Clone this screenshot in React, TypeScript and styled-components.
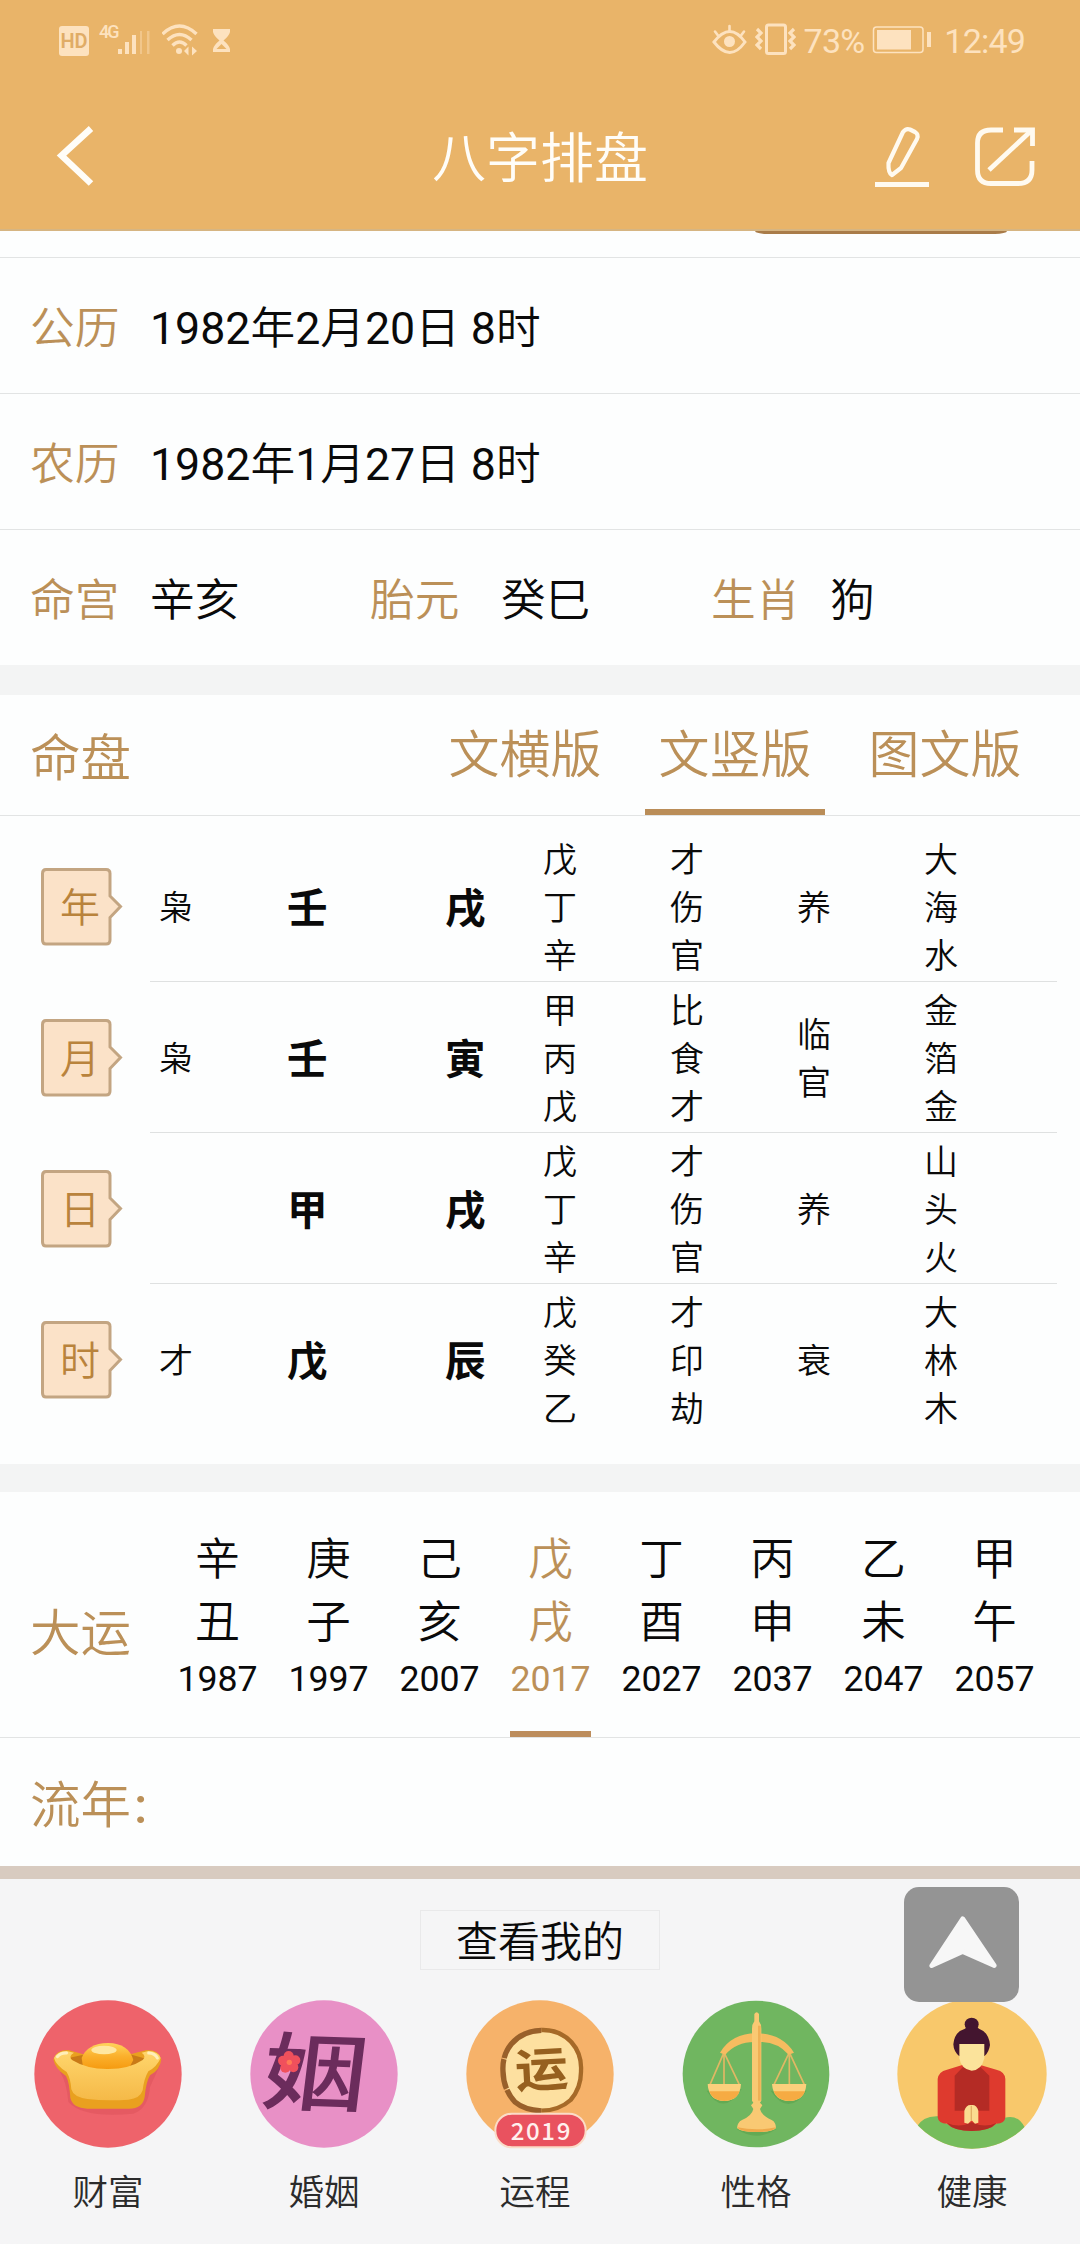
import React from "react";
import styled, { createGlobalStyle } from "styled-components";

const GOLD = "#bb9058";
const STATUS = "#fde2bf";

const GlobalStyle = createGlobalStyle`
  * { box-sizing: border-box; }
  body {
    margin: 0;
    background: #fdfefe;
    font-family: Roboto, "Noto Sans CJK SC", sans-serif;
    font-weight: 350;
    color: #0a0a0a;
  }
`;

const Screen = styled.main`
  width: 1080px;
  height: 2244px;
  display: flex;
  flex-direction: column;
  overflow: hidden;
`;

/* ---------- header ---------- */
const Header = styled.header`
  flex: none;
  height: 231px;
  background: #e9b469;
  border-bottom: 2px solid #d6b582;
`;

const StatusBar = styled.div`
  height: 80px;
  padding: 0 55px 0 59px;
  display: flex;
  justify-content: space-between;
  align-items: center;
  color: ${STATUS};
`;

const StatusGroup = styled.div<{ $gap: number }>`
  display: flex;
  align-items: center;
  gap: ${(p) => p.$gap}px;
  font-size: 34px;
  line-height: 40px;
  svg { display: block; flex: none; }
`;

const HdBadge = styled.span`
  width: 30px;
  height: 30px;
  margin-top: 2px;
  border-radius: 3px;
  background: ${STATUS};
  color: #e0ac66;
  font-size: 20px;
  font-weight: 600;
  line-height: 31px;
  text-align: center;
`;

const Network = styled.span`
  display: flex;
  align-items: flex-start;
  font-size: 18px;
  font-weight: 500;
  line-height: 17px;
  letter-spacing: -2px;
`;

const BatteryText = styled.span`
  font-size: 34px;
  font-weight: 400;
  letter-spacing: -0.8px;
  margin-top: 2px;
`;

const Clock = styled(BatteryText)`
  margin-left: 4px;
`;

const TitleBar = styled.div`
  height: 149px;
  display: grid;
  grid-template-columns: 1fr auto 1fr;
  align-items: center;
`;

const IconButton = styled.button`
  padding: 0;
  border: 0;
  background: none;
  display: block;
  svg { display: block; }
`;

const BackSlot = styled.div`
  padding: 3px 0 0 56px;
`;

const ActionSlot = styled.div`
  padding: 4px 43px 0 0;
  display: flex;
  justify-content: flex-end;
  gap: 43px;
`;

const Title = styled.h1`
  margin: 11px 0 0;
  font-size: 54px;
  font-weight: 350;
  line-height: 64px;
  color: #fffdf8;
`;

/* ---------- profile rows ---------- */
const ScrolledCard = styled.div`
  flex: none;
  height: 27px;
  padding-left: 755px;
  border-bottom: 1px solid #e2e4e4;
`;

const HiddenButtonEdge = styled.div`
  width: 252px;
  height: 3px;
  background: #a97c49;
  border-radius: 0 0 12px 12px / 0 0 3px 3px;
`;

const InfoRow = styled.div<{ $last?: boolean }>`
  flex: none;
  height: ${(p) => (p.$last ? 135 : 136)}px;
  padding: 7px 0 0 30px;
  display: flex;
  align-items: center;
  font-size: 44.7px;
  line-height: 60px;
  border-bottom: ${(p) => (p.$last ? "0" : "1px solid #e2e4e4")};
`;

const InfoLabel = styled.span<{ $width?: number }>`
  color: ${GOLD};
  width: ${(p) => p.$width ?? 120}px;
`;

const InfoValue = styled.span<{ $width?: number }>`
  width: ${(p) => (p.$width ? p.$width + "px" : "auto")};
  white-space: pre;
`;

const Digits = styled.span`
  font-weight: 400;
`;

const Divider = styled.div<{ $height: number }>`
  flex: none;
  height: ${(p) => p.$height}px;
  background: #f3f4f4;
`;

/* ---------- chart ---------- */
const ChartHeader = styled.div`
  flex: none;
  height: 121px;
  padding: 0 45px 0 30px;
  display: flex;
  justify-content: space-between;
  border-bottom: 1px solid #e2e4e4;
`;

const SectionLabel = styled.h2`
  margin: 0;
  font-size: 50.5px;
  font-weight: 350;
  line-height: 60px;
  color: ${GOLD};
`;

const ChartTitle = styled(SectionLabel)`
  padding-top: 34px;
`;

const Colon = styled.span`
  margin-left: 3px;
  font-weight: 500;
`;

const Tabs = styled.div`
  display: flex;
  gap: 30px;
`;

const Tab = styled.button<{ $active?: boolean }>`
  width: 180px;
  height: 120px;
  padding: 7px 0 0;
  border: 0;
  border-bottom: 6px solid ${(p) => (p.$active ? "#ba8d58" : "transparent")};
  background: none;
  font: inherit;
  font-size: 51px;
  line-height: 60px;
  color: ${GOLD};
`;

const ChartBody = styled.div`
  flex: none;
  padding: 15px 23px 29px 0;
  height: 648px;
`;

const PillarRow = styled.div`
  height: 151px;
  display: flex;
`;

const BadgeCell = styled.div`
  width: 150px;
  padding-left: 41px;
  display: flex;
  align-items: center;
`;

const Badge = styled.div`
  width: 82px;
  height: 78px;
  display: grid;
  color: #b9833c;
  font-size: 40px;
  line-height: 81px;
  > * { grid-area: 1 / 1; }
  > span { padding-left: 19px; }
`;

const PillarCells = styled.div<{ $line: boolean }>`
  flex: 1;
  padding-left: 9px;
  display: grid;
  grid-template-columns: 128px 158px 98px 127px 127px 127px 1fr;
  align-items: center;
  border-bottom: 1px solid ${(p) => (p.$line ? "#dfe1e1" : "transparent")};
`;

const SmallText = styled.span`
  width: 34px;
  padding-top: 3px;
  font-size: 34px;
  line-height: 48px;
  word-break: break-all;
`;

const Stem = styled.strong`
  padding-top: 5px;
  font-size: 40.5px;
  font-weight: 700;
  line-height: 50px;
`;

/* ---------- luck cycles ---------- */
const LuckSection = styled.section`
  flex: none;
  height: 246px;
  padding-left: 30px;
  display: flex;
  border-bottom: 1px solid #e2e4e4;
`;

const LuckTitle = styled(SectionLabel)`
  width: 132px;
  padding-top: 112px;
`;

const LuckList = styled.div`
  display: grid;
  grid-template-columns: repeat(8, 111px);
`;

const LuckItem = styled.div<{ $active?: boolean }>`
  display: flex;
  flex-direction: column;
  align-items: center;
  padding-top: 37px;
  font-size: 44.5px;
  line-height: 63px;
  color: ${(p) => (p.$active ? GOLD : "inherit")};
`;

const LuckYear = styled.span<{ $active?: boolean }>`
  height: 82px;
  border-bottom: 6px solid ${(p) => (p.$active ? "#bd8d5c" : "transparent")};
  font-size: 35.7px;
  font-weight: 400;
  line-height: 49px;
`;

const YearSection = styled.section`
  flex: none;
  height: 128px;
  padding: 38px 30px 0;
`;

/* ---------- bottom panel ---------- */
const BottomPanel = styled.footer`
  position: relative;
  flex: 1;
  border-top: 13px solid #d8cbc0;
  background: #f5f5f6;
  display: flex;
  flex-direction: column;
  align-items: center;
`;

const ViewMine = styled.div`
  width: 240px;
  height: 60px;
  margin-top: 31px;
  border: 1px solid #e9e9ea;
  text-align: center;
  font-size: 42px;
  line-height: 63px;
`;

const Shortcuts = styled.nav`
  width: 1080px;
  margin-top: 29px;
  display: grid;
  grid-template-columns: repeat(5, 1fr);
`;

const Shortcut = styled.a`
  display: flex;
  flex-direction: column;
  align-items: center;
  font-size: 35.5px;
  line-height: 50px;
  color: #2b2b2b;
  svg { display: block; height: 150px; }
`;

const ShortcutLabel = styled.span<{ $shift: number }>`
  margin-top: 19px;
  padding-right: ${(p) => p.$shift}px;
`;

const ScrollTop = styled.button`
  position: absolute;
  left: 904px;
  top: 8px;
  width: 115px;
  height: 115px;
  padding: 0;
  border: 0;
  border-radius: 15px;
  background: #949494;
  svg { display: block; }
`;

const CJK = '"Noto Sans CJK SC", sans-serif';

const pillars = [
  { name: "年", god: "枭", stem: "壬", branch: "戌", hidden: "戊丁辛", gods: "才伤官", phase: "养", sound: "大海水" },
  { name: "月", god: "枭", stem: "壬", branch: "寅", hidden: "甲丙戊", gods: "比食才", phase: "临官", sound: "金箔金" },
  { name: "日", god: "", stem: "甲", branch: "戌", hidden: "戊丁辛", gods: "才伤官", phase: "养", sound: "山头火" },
  { name: "时", god: "才", stem: "戊", branch: "辰", hidden: "戊癸乙", gods: "才印劫", phase: "衰", sound: "大林木" },
];

const luck = [
  ["辛", "丑", "1987"],
  ["庚", "子", "1997"],
  ["己", "亥", "2007"],
  ["戊", "戌", "2017"],
  ["丁", "酉", "2027"],
  ["丙", "申", "2037"],
  ["乙", "未", "2047"],
  ["甲", "午", "2057"],
];

/* Numerals are set a step heavier than the characters around them. */
const DateText = ({ children }: { children: string }) => (
  <InfoValue>
    {children.split(/(\d+)/).map((part, i) =>
      /\d/.test(part) ? <Digits key={i}>{part}</Digits> : part
    )}
  </InfoValue>
);

const SignalIcon = () => (
  <svg width="34" height="34" viewBox="117 24 34 34" fill={STATUS}>
    <rect x="117" y="50" width="4" height="5" />
    <rect x="124" y="43" width="4" height="12" />
    <rect x="131" y="36" width="4" height="19" />
    <rect x="139" y="32" width="2" height="23" opacity="0.4" />
    <rect x="146" y="32" width="2.5" height="23" opacity="0.4" />
  </svg>
);

const WifiIcon = () => (
  <svg width="37" height="34" viewBox="160 24 37 34" fill="none" stroke={STATUS} strokeWidth="3.4">
    <path d="M160.500 35 Q177.500 19 194.500 35" />
    <path d="M165.500 41 Q177.500 30 189.500 41" />
    <path d="M170.500 46.500 Q177.500 39.500 184.500 46.500" />
    <circle cx="177" cy="52" r="3" fill={STATUS} stroke="none" />
    <path d="M182 52 l4.500 -4.500 v9z M195 52 l-5 -4.500 v9z" fill={STATUS} stroke="none" />
  </svg>
);

const HourglassIcon = () => (
  <svg width="22" height="34" viewBox="208 24 22 34" fill={STATUS}>
    <path d="M212 30 H229 V33 Q228 37 222.500 41.500 Q228 46 229 50 V53 H212 V50 Q213 46 218.500 41.500 Q213 37 212 33Z" />
    <path d="M215.500 50 L220.500 45 L225.500 50Z" fill="#e9b469" />
  </svg>
);

const EyeIcon = () => (
  <svg width="35" height="34" viewBox="711 24 35 34" fill="none" stroke={STATUS} strokeWidth="3" strokeLinecap="round">
    <path d="M713 43 Q729 22 744 43 Q729 64 713 43Z" />
    <circle cx="728.500" cy="42.500" r="5.500" fill={STATUS} stroke="none" />
    <path d="M728.500 27 V32 M714 32.500 L717 36.500 M743 32.500 L740 36.500" strokeWidth="2.600" />
  </svg>
);

const VibrateIcon = () => (
  <svg width="41" height="34" viewBox="756 24 41 34" fill="none" stroke={STATUS} strokeWidth="3">
    <rect x="767.500" y="26" width="19" height="28.500" rx="2" />
    <path d="M758 30 l4 4 l-4 4 l4 4 l-4 4 l4 4 M795 30 l-4 4 l4 4 l-4 4 l4 4 l-4 4" strokeWidth="3.200" />
  </svg>
);

const BatteryIcon = () => (
  <svg width="60" height="34" viewBox="873 24 60 34" fill={STATUS}>
    <rect x="874.500" y="28" width="49.500" height="25.500" rx="3" fill="none" stroke={STATUS} strokeWidth="1.500" />
    <rect x="878" y="31" width="34" height="19.500" />
    <rect x="928" y="33" width="4" height="15" />
  </svg>
);

const BackIcon = () => (
  <svg width="40" height="64" viewBox="56 124 40 64" fill="none" stroke="#fffdf8" strokeWidth="6.500">
    <path d="M91 128.500 L61.500 155.500 L91 183.500" />
  </svg>
);

const EditIcon = () => (
  <svg width="56" height="64" viewBox="875 124 56 64" fill="none" stroke="#fffaf0" strokeWidth="4.400" strokeLinejoin="round">
    <path d="M904 131 Q907 127 911 128.500 L916 131 Q920 133.500 918 138 L902 167 L893 174 Q889 172 889.500 162 Z" strokeWidth="4.200" />
    <path d="M876 183.500 H930" strokeWidth="5" />
  </svg>
);

const ShareIcon = () => (
  <svg width="64" height="64" viewBox="973 124 64 64" fill="none" stroke="#fffaf0" strokeWidth="4.800">
    <path d="M1003 129 H991 Q977.500 129 977.500 142 V169 Q977.500 182.500 991 182.500 H1018 Q1032 182.500 1032 169 V160" />
    <path d="M1014 129 H1032.500 V145" />
    <path d="M989 169 L1032 129" />
  </svg>
);

const BadgeShape = () => (
  <svg width="82" height="78" viewBox="0 0 82 78">
    <path
      d="M5 1.500 H65 Q69 1.500 69 5.500 V28 L79.500 38.500 L69 49.500 V72 Q69 76 65 76 H5 Q1.500 76 1.500 72 V5.500 Q1.500 1.500 5 1.500Z"
      fill="#fbe2c8"
      stroke="#c3a582"
      strokeWidth="3"
    />
  </svg>
);

const WealthIcon = () => (
  <svg width="148" height="148" viewBox="102 454 444 444">
    <defs>
      <linearGradient id="ingot" x1="0" y1="0" x2="0" y2="1">
        <stop offset="0" stopColor="#ffd66c" />
        <stop offset="1" stopColor="#f5b948" />
      </linearGradient>
      <linearGradient id="nugget" x1="0" y1="0" x2="0" y2="1">
        <stop offset="0" stopColor="#ffd45c" />
        <stop offset="0.500" stopColor="#fbb02c" />
        <stop offset="1" stopColor="#f59a10" />
      </linearGradient>
    </defs>
    <circle cx="324" cy="676" r="221" fill="#ee636b" />
    <path d="M180 670 Q200 700 205 760 Q250 810 400 795 Q445 780 450 715 L480 650Z" fill="#d95058" opacity="0.450" />
    <path d="M160 632 Q168 604 205 604 L255 618 H385 L440 604 Q478 604 484 632 Q480 665 450 680 Q438 700 434 745 Q428 781 385 780 H262 Q218 778 211 748 Q208 700 198 682 Q165 660 160 632Z" fill="#e9a01f" />
    <path d="M206 628 L250 618 L395 618 L438 630 L400 655 H245Z" fill="#c97a17" />
    <path d="M245 628 Q262 584 324 583 Q386 584 400 634 L385 662 H250Z" fill="url(#nugget)" />
    <ellipse cx="312" cy="604" rx="38" ry="13" fill="#ffe7a0" />
    <path d="M162 628 Q170 608 200 607 L222 612 Q204 622 216 634 Q262 662 325 661 Q388 661 428 634 Q440 622 425 612 L445 607 Q476 608 482 628 Q470 655 445 668 Q432 690 428 725 Q420 750 385 753 Q320 758 262 751 Q220 745 214 722 Q212 690 200 670 Q168 650 162 628Z" fill="url(#ingot)" />
    <path d="M172 624 Q182 612 200 613" fill="none" stroke="#ffefba" strokeWidth="9" strokeLinecap="round" />
    <path d="M446 613 Q466 614 472 628" fill="none" stroke="#ffefba" strokeWidth="9" strokeLinecap="round" />
  </svg>
);

const MarriageIcon = () => (
  <svg width="148" height="148" viewBox="750 454 444 444">
    <circle cx="972" cy="676" r="221" fill="#e890c6" />
    <g transform="translate(945 674) rotate(2) skewX(-5) scale(1.160 0.940)">
      <text x="0" y="98" textAnchor="middle" fontFamily={CJK} fontWeight="500" fontSize="270" fill="#6b2c5c">姻</text>
    </g>
    <g fill="#f0505c">
      <circle cx="866" cy="622" r="15" />
      <circle cx="886" cy="635" r="15" />
      <circle cx="880" cy="656" r="15" />
      <circle cx="856" cy="657" r="15" />
      <circle cx="849" cy="636" r="15" />
    </g>
    <circle cx="868" cy="641" r="8" fill="#ff7a55" />
  </svg>
);

const FortuneIcon = () => (
  <svg width="148" height="148" viewBox="198 450 444 444">
    <circle cx="420" cy="672" r="221" fill="#f6b26a" />
    <ellipse cx="424" cy="662" rx="116" ry="120" fill="#fde0a0" />
    <path d="M424 540 Q478 538 514 576 Q546 612 543 662 Q544 712 512 750 Q476 782 424 782" fill="none" stroke="#a66a28" strokeWidth="13" />
    <path d="M424 541 Q368 542 334 582 Q306 616 309 664 Q310 718 345 756 Q372 779 424 783" fill="none" stroke="#99602a" strokeWidth="16" strokeDasharray="150 3 90 4" />
    <g transform="translate(425 657) rotate(-3) scale(1.060 0.940)">
      <text x="0" y="56" textAnchor="middle" fontFamily={CJK} fontWeight="700" fontSize="150" fill="#96601f">运</text>
    </g>
    <rect x="286" y="791" width="271" height="101" rx="50" fill="#e9525f" stroke="#fbdcc8" strokeWidth="6" />
    <text x="424" y="870" textAnchor="middle" fontFamily={CJK} fontWeight="500" fontSize="72" letterSpacing="5" fill="#fff0ee">2019</text>
  </svg>
);

const CharacterIcon = () => (
  <svg width="148" height="148" viewBox="66 448 444 444">
    <circle cx="288" cy="670" r="220" fill="#70b660" />
    <path d="M140 720 Q190 800 245 715 M332 720 Q385 800 440 720 M230 835 Q290 875 350 835" fill="#5aa24d" opacity="0.600" />
    <g fill="none" stroke="#e0b864" strokeWidth="5">
      <path d="M192 605 L150 702 M192 605 V700 M192 605 L238 702" />
      <path d="M388 605 L342 702 M388 605 V700 M388 605 L433 702" />
    </g>
    <path d="M180 606 Q215 548 289 548 Q365 548 402 606 L386 612 Q350 570 289 574 Q230 572 196 612Z" fill="#f6bc60" />
    <path d="M143 700 H243 Q240 750 193 751 Q146 750 143 700Z" fill="#fbd07c" />
    <path d="M148 722 H239 Q230 750 193 751 Q156 750 148 722Z" fill="#f6ab43" />
    <path d="M336 700 H439 Q436 750 388 751 Q340 750 336 700Z" fill="#fbd07c" />
    <path d="M341 722 H435 Q426 750 388 751 Q350 750 341 722Z" fill="#f6ab43" />
    <path d="M283 490 Q290 480 297 490 V512 Q304 520 304 535 V750 L300 756 L307 764 L300 775 Q304 795 335 808 Q348 815 348 832 Q340 844 290 844 Q240 844 231 832 Q232 815 246 808 Q276 795 280 775 L273 764 L280 756 L276 750 V535 Q276 520 283 512Z" fill="#f9c973" />
    <path d="M298 525 V750" stroke="#efb055" strokeWidth="8" />
    <path d="M232 830 Q290 842 348 830 Q342 844 290 844 Q238 844 232 830Z" fill="#efa94b" />
  </svg>
);

const HealthIcon = () => (
  <svg width="150" height="150" viewBox="712 450 450 450">
    <defs>
      <clipPath id="disc">
        <circle cx="937" cy="675" r="224" />
      </clipPath>
    </defs>
    <g clipPath="url(#disc)">
      <rect x="712" y="450" width="450" height="450" fill="#f8c86b" />
      <path d="M770 835 Q790 800 835 802 L860 825 H1010 L1035 806 Q1075 795 1095 835 L1050 910 H810Z" fill="#76bc5c" />
      <path d="M834 690 Q836 668 862 662 L908 648 H962 L1010 662 Q1036 668 1037 690 V805 Q1036 824 1010 824 Q990 845 936 845 Q882 845 862 824 Q836 824 834 805Z" fill="#de3a2e" />
      <path d="M885 680 L912 652 H960 L989 680 V785 H885Z" fill="#b42b25" />
      <path d="M862 822 Q900 838 936 820 Q974 838 1010 822 Q990 846 936 846 Q882 846 862 822Z" fill="#b42b25" />
      <path d="M899 585 H974 V628 Q966 664 936 665 Q905 662 899 628Z" fill="#fbe39b" />
      <ellipse cx="936" cy="526" rx="21" ry="20" fill="#43152f" />
      <path d="M881 586 Q884 548 916 539 L936 520 L958 539 Q988 550 991 588 Q988 610 974 622 V585 H899 V622 Q882 608 881 586Z" fill="#43152f" />
      <path d="M914 821 V785 Q920 766 935 768 Q951 766 956 785 V821 L946 824 L936 814 L925 824Z" fill="#fbdc90" />
      <path d="M935 770 V815" stroke="#e2b066" strokeWidth="4" />
    </g>
  </svg>
);

const ArrowUp = () => (
  <svg width="115" height="115" viewBox="732 111 345 345">
    <path d="M908 206 L1003 347 L908 305 L815 347Z" fill="#f7f7f7" stroke="#f7f7f7" strokeWidth="14" strokeLinejoin="round" />
  </svg>
);

const shortcuts = [
  { label: "财富", Icon: WealthIcon, shift: 0 },
  { label: "婚姻", Icon: MarriageIcon, shift: 0 },
  { label: "运程", Icon: FortuneIcon, shift: 10 },
  { label: "性格", Icon: CharacterIcon, shift: 0 },
  { label: "健康", Icon: HealthIcon, shift: 0 },
];

export default function App() {
  return (
    <Screen>
      <GlobalStyle />
      <Header>
        <StatusBar>
          <StatusGroup $gap={10}>
            <HdBadge>HD</HdBadge>
            <Network>
              4G
              <SignalIcon />
            </Network>
            <WifiIcon />
            <HourglassIcon />
          </StatusGroup>
          <StatusGroup $gap={8}>
            <EyeIcon />
            <VibrateIcon />
            <BatteryText>73%</BatteryText>
            <BatteryIcon />
            <Clock>12:49</Clock>
          </StatusGroup>
        </StatusBar>
        <TitleBar>
          <BackSlot>
            <IconButton aria-label="返回"><BackIcon /></IconButton>
          </BackSlot>
          <Title>八字排盘</Title>
          <ActionSlot>
            <IconButton aria-label="编辑"><EditIcon /></IconButton>
            <IconButton aria-label="分享"><ShareIcon /></IconButton>
          </ActionSlot>
        </TitleBar>
      </Header>

      <ScrolledCard>
        <HiddenButtonEdge />
      </ScrolledCard>
      <InfoRow>
        <InfoLabel>公历</InfoLabel>
        <DateText>1982年2月20日 8时</DateText>
      </InfoRow>
      <InfoRow>
        <InfoLabel>农历</InfoLabel>
        <DateText>1982年1月27日 8时</DateText>
      </InfoRow>
      <InfoRow $last>
        <InfoLabel>命宫</InfoLabel>
        <InfoValue $width={220}>辛亥</InfoValue>
        <InfoLabel $width={131}>胎元</InfoLabel>
        <InfoValue $width={210}>癸巳</InfoValue>
        <InfoLabel $width={119}>生肖</InfoLabel>
        <InfoValue>狗</InfoValue>
      </InfoRow>
      <Divider $height={30} />

      <ChartHeader>
        <ChartTitle>命盘</ChartTitle>
        <Tabs>
          <Tab>文横版</Tab>
          <Tab $active>文竖版</Tab>
          <Tab>图文版</Tab>
        </Tabs>
      </ChartHeader>
      <ChartBody>
        {pillars.map((p, i) => (
          <PillarRow key={p.name}>
            <BadgeCell>
              <Badge>
                <BadgeShape />
                <span>{p.name}</span>
              </Badge>
            </BadgeCell>
            <PillarCells $line={i < pillars.length - 1}>
              <SmallText>{p.god}</SmallText>
              <Stem>{p.stem}</Stem>
              <Stem>{p.branch}</Stem>
              <SmallText>{p.hidden}</SmallText>
              <SmallText>{p.gods}</SmallText>
              <SmallText>{p.phase}</SmallText>
              <SmallText>{p.sound}</SmallText>
            </PillarCells>
          </PillarRow>
        ))}
      </ChartBody>
      <Divider $height={28} />

      <LuckSection>
        <LuckTitle>大运</LuckTitle>
        <LuckList>
          {luck.map(([stem, branch, year]) => (
            <LuckItem key={year} $active={year === "2017"}>
              <span>{stem}</span>
              <span>{branch}</span>
              <LuckYear $active={year === "2017"}>{year}</LuckYear>
            </LuckItem>
          ))}
        </LuckList>
      </LuckSection>
      <YearSection>
        <SectionLabel>流年<Colon>:</Colon></SectionLabel>
      </YearSection>

      <BottomPanel>
        <ViewMine>查看我的</ViewMine>
        <Shortcuts>
          {shortcuts.map(({ label, Icon, shift }) => (
            <Shortcut key={label}>
              <Icon />
              <ShortcutLabel $shift={shift}>{label}</ShortcutLabel>
            </Shortcut>
          ))}
        </Shortcuts>
        <ScrollTop aria-label="回到顶部"><ArrowUp /></ScrollTop>
      </BottomPanel>
    </Screen>
  );
}
